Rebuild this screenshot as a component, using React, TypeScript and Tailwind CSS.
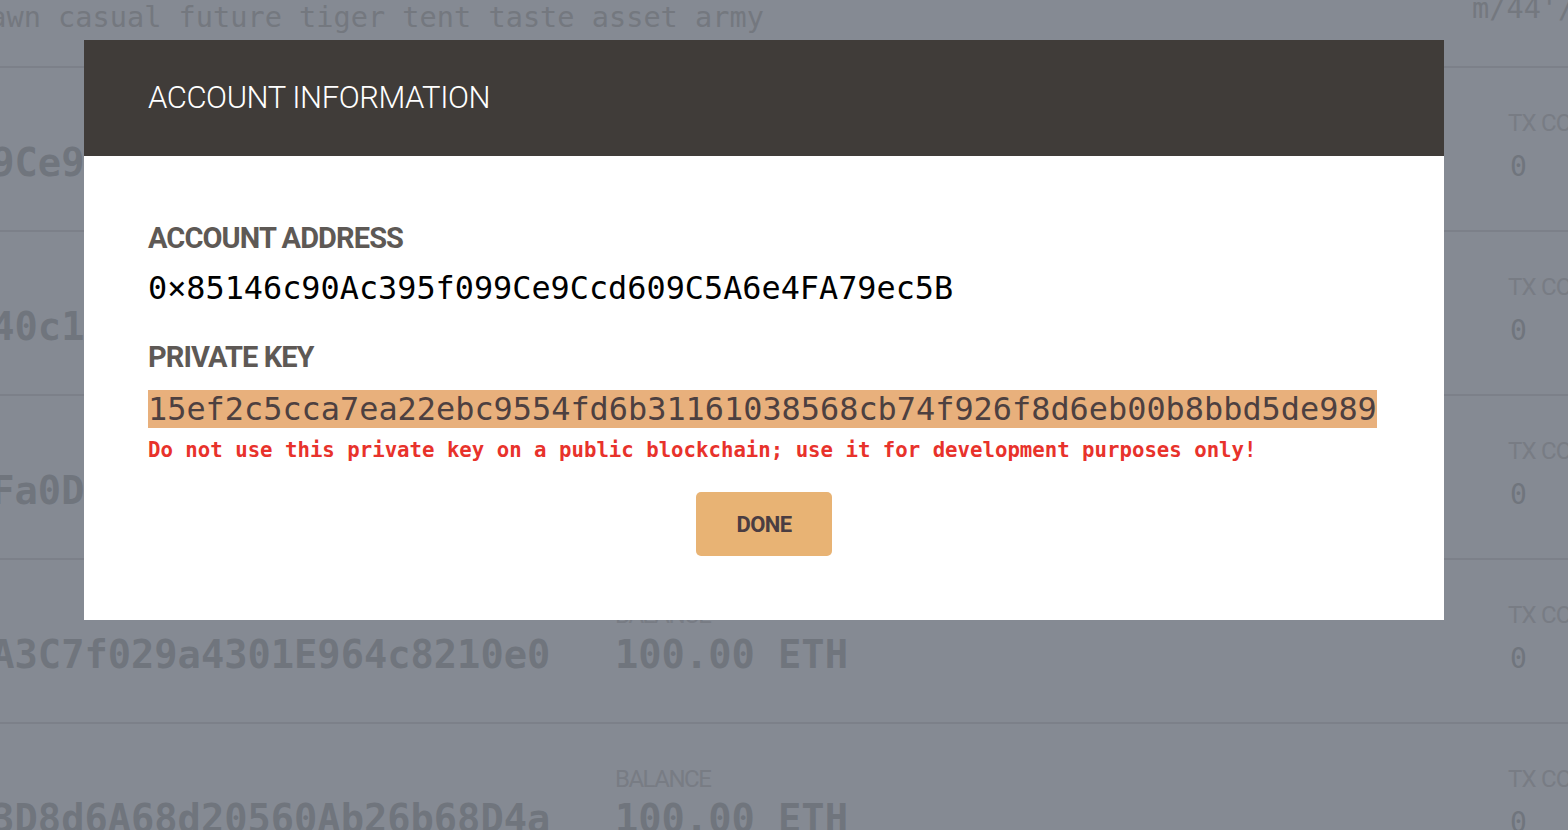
const mono = "font-['DejaVu_Sans_Mono',monospace]";
const cond = "font-['Roboto',sans-serif]";

const accounts = [
  "0×85146c90Ac395f099Ce9Ccd609C5A6e4FA79ec5B",
  "0×7E2b9a1D63fC05e840c1B7d3F9a26E1c58D04b2A",
  "0×C4d81F27e9A0b35fFa0D91e6B2c7438dA5f0E1c9",
  "0×5b9E02dC71a84F6eA3C7f029a4301E964c8210e0",
  "0×e1F0a7C93b26D48c3D8d6A68d20560Ab26b68D4a",
];

function AccountRow({ address }: { address: string }) {
  return (
    <div className="flex h-[164px] shrink-0 border-b-2 border-[#7c8089] pt-[42px]">
      <div className="ml-[-428px] w-[978px] shrink-0">
        <div className={`${cond} h-[26px] pt-[1px] text-[24px] leading-none tracking-[-1.5px] text-[#787c84]`}>ADDRESS</div>
        <div className={`${mono} mt-[8px] whitespace-nowrap text-[38.7px] font-bold leading-none text-[#70757d]`}>
          {address}
        </div>
      </div>
      <div className="ml-[65px] w-[893px] shrink-0">
        <div className={`${cond} h-[26px] pt-[1px] text-[24px] leading-none tracking-[-1.5px] text-[#787c84]`}>BALANCE</div>
        <div className={`${mono} mt-[8px] whitespace-nowrap text-[38.7px] font-bold leading-none text-[#70757d]`}>
          100.00 ETH
        </div>
      </div>
      <div className="shrink-0 whitespace-nowrap">
        <div className={`${cond} h-[26px] pt-[1px] text-[24px] leading-none tracking-[-0.8px] text-[#787c84]`}>TX COUNT</div>
        <div className={`${mono} ml-[2px] mt-[17px] text-[28px] leading-none text-[#70757d]`}>0</div>
      </div>
    </div>
  );
}

export default function App() {
  return (
    <div className="relative h-[830px] w-full overflow-hidden bg-[#858a93]">
      <div className="flex flex-col">
        <div className="flex h-[68px] shrink-0 border-b-2 border-[#7c8089]">
          <div className={`${mono} ml-[-28px] w-[1500px] shrink-0 whitespace-nowrap pt-[3px] text-[28.6px] leading-none text-[#74787f]`}>
            dawn casual future tiger tent taste asset army
          </div>
          <div className={`${mono} mt-[-6px] shrink-0 whitespace-nowrap text-[28.6px] leading-none text-[#74787f]`}>
            m/44'/60'/0'/0/account_index
          </div>
        </div>
        {accounts.map((a) => (
          <AccountRow key={a} address={a} />
        ))}
      </div>

      <div className="absolute inset-0 pl-[84px] pt-[40px]">
        <div className="w-[1360px] bg-white">
          <div className="flex h-[116px] items-center bg-[#403c39] px-16">
            <h1 className={`${cond} pb-[1px] text-[31px] font-light leading-none tracking-[-0.45px] text-white`}>
              ACCOUNT INFORMATION
            </h1>
          </div>
          <div className="flex flex-col px-16 pb-16 pt-[68px]">
            <h2 className={`${cond} text-[29px] font-bold leading-none tracking-[-0.9px] text-[#5e5955]`}>
              ACCOUNT ADDRESS
            </h2>
            <div className={`${mono} mt-[20px] text-[31.85px] leading-none text-black`}>
              0×85146c90Ac395f099Ce9Ccd609C5A6e4FA79ec5B
            </div>
            <h2 className={`${cond} mt-[38px] text-[29px] font-bold leading-none tracking-[-0.9px] text-[#5e5955]`}>
              PRIVATE KEY
            </h2>
            <div className="mt-[18px]">
              <span className={`${mono} inline-block bg-[#e8b07c] text-[31.9px] leading-[38px] text-[#4d4040]`}>
                15ef2c5cca7ea22ebc9554fd6b31161038568cb74f926f8d6eb00b8bbd5de989
              </span>
            </div>
            <p className={`${mono} mt-[12px] text-[20.7px] font-bold leading-none text-[#e8322b]`}>
              Do not use this private key on a public blockchain; use it for development purposes only!
            </p>
            <div className="mt-[31px] flex justify-center">
              <button
                className={`${cond} h-[64px] w-[136px] rounded-[5px] bg-[#e8b374] pt-[2px] text-[22px] font-bold tracking-[-0.6px] text-[#4a3d42]`}
              >
                DONE
              </button>
            </div>
          </div>
        </div>
      </div>
    </div>
  );
}
